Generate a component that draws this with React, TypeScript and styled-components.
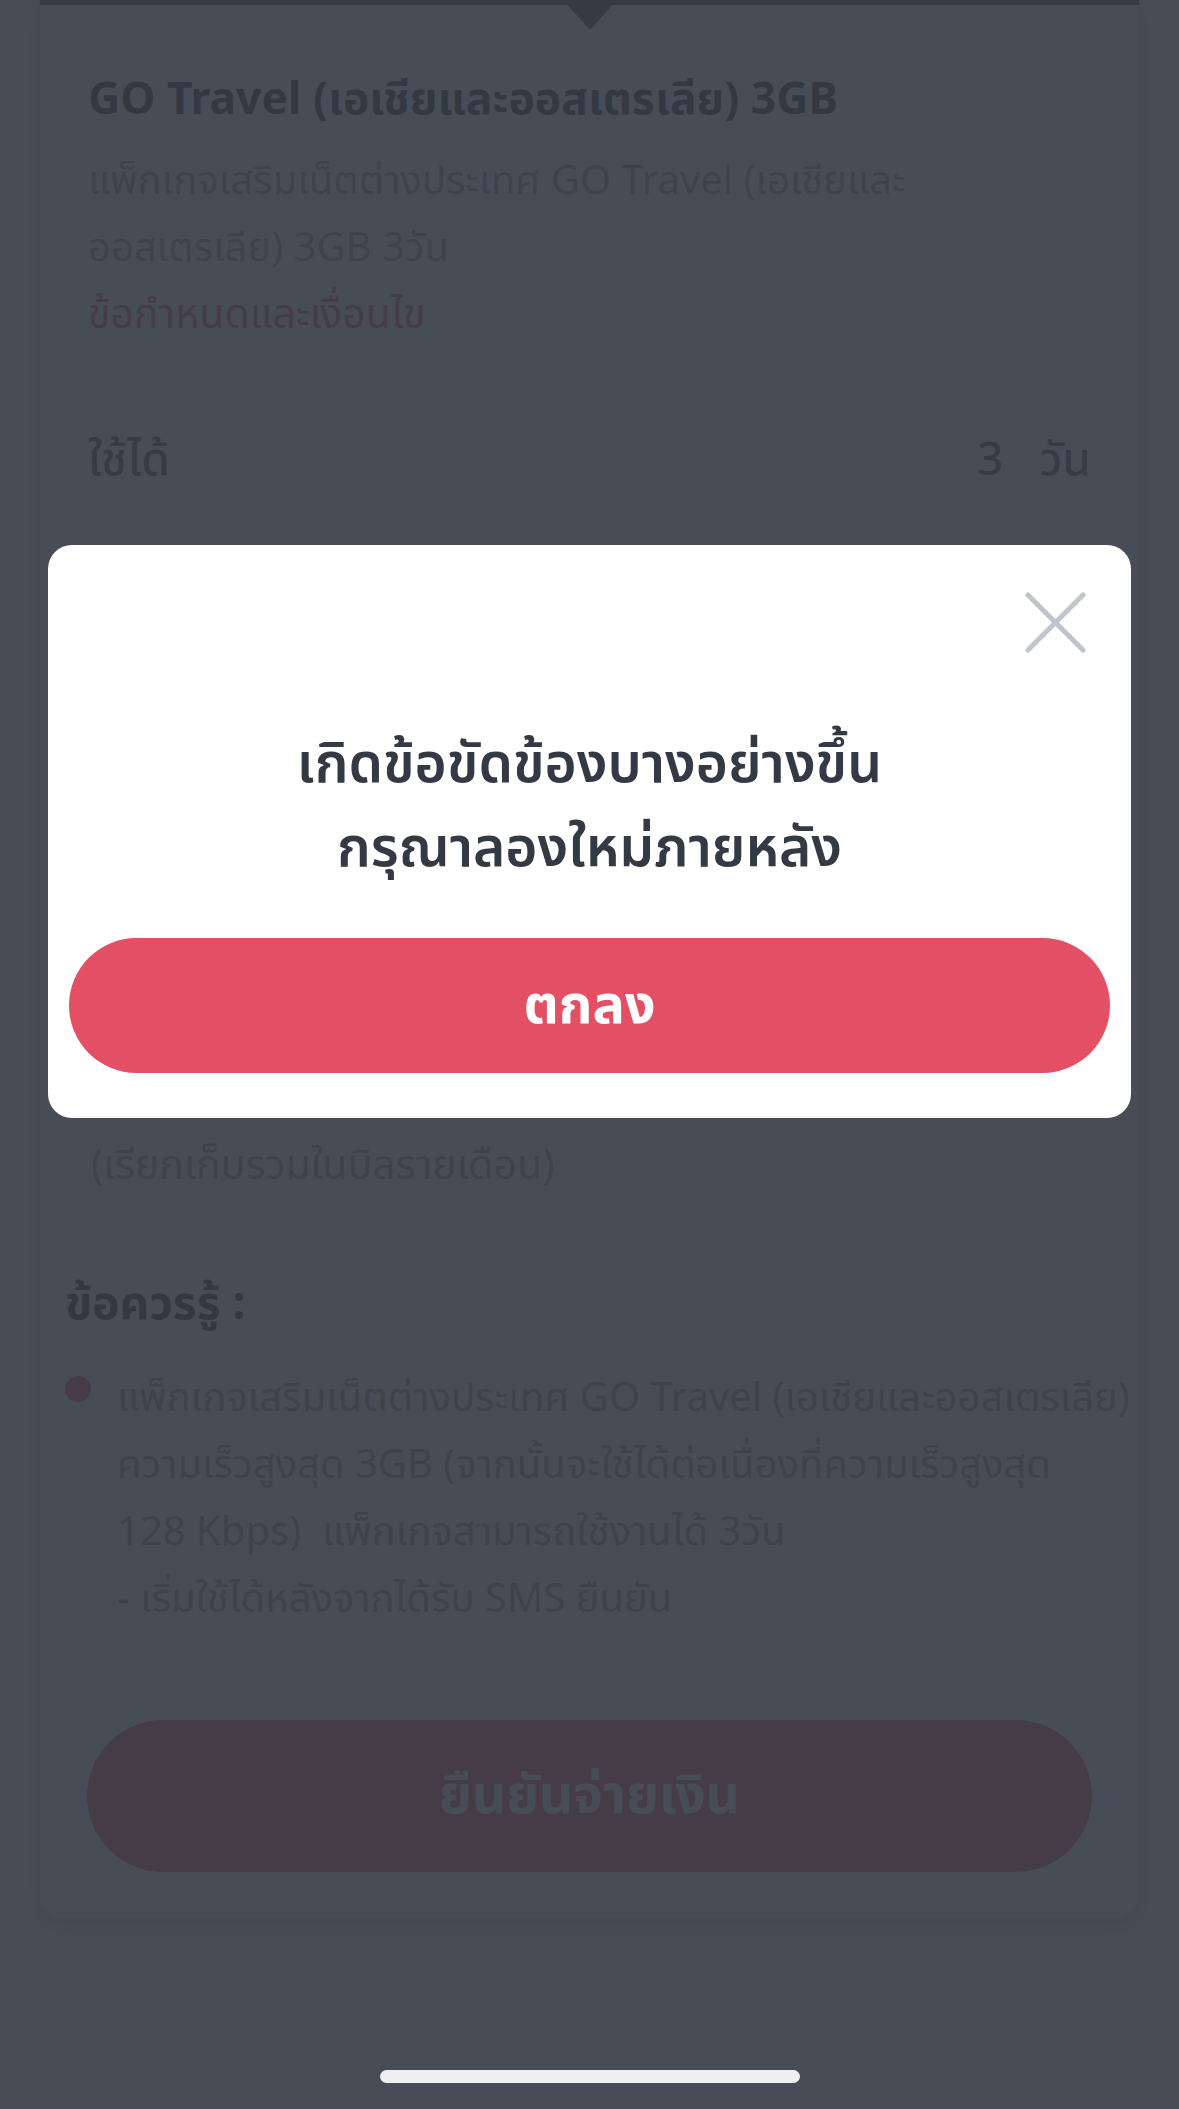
import React from 'react';
import styled, { createGlobalStyle } from 'styled-components';

const GlobalStyle = createGlobalStyle`
  * {
    box-sizing: border-box;
  }

  body {
    margin: 0;
    background: #ffffff;
    font-family: 'Noto Sans', 'Noto Sans Thai', 'Open Sans', sans-serif;
    color: #333;
  }
`;

const Page = styled.div`
  position: relative;
  min-height: 2109px;
  padding: 0 38px;
  background: #ffffff;
`;

const Card = styled.div`
  background: #ffffff;
  border: 2px solid #e6e6e6;
  border-top: none;
  border-radius: 0 0 26px 26px;
  box-shadow: 0 8px 18px rgba(0, 0, 0, 0.18);
`;

const TabIndicator = styled.div`
  height: 5px;
  background: #454545;
  display: flex;
  justify-content: center;

  &::after {
    content: '';
    border-left: 27px solid transparent;
    border-right: 27px solid transparent;
    border-top: 30px solid #454545;
    height: 0;
  }
`;

const Section = styled.div<{ $last?: boolean }>`
  margin: 0 33px;
  padding: 0 15px;
  border-bottom: ${(p) => (p.$last ? 'none' : '2px solid #eeeeee')};
`;

const Header = styled(Section)`
  padding-top: 62px;
  padding-bottom: 37px;
`;

const PackTitle = styled.h1`
  margin: 0 0 18px;
  font-size: 44.5px;
  line-height: 60px;
  font-weight: 700;
  color: #333333;
  white-space: nowrap;
`;

const Description = styled.p`
  margin: 0;
  font-size: 40px;
  line-height: 67px;
  font-weight: 400;
  color: #9a9a9a;
`;

const TermsLink = styled.a`
  display: block;
  font-size: 41px;
  line-height: 67px;
  font-weight: 400;
  color: #e3506a;
  text-decoration: none;
`;

const InfoRow = styled(Section)`
  height: 153px;
  display: flex;
  align-items: center;
  justify-content: space-between;
`;

const RowLabel = styled.span`
  font-size: 46px;
  font-weight: 500;
  color: #555555;
`;

const RowValue = styled.span`
  display: flex;
  gap: 36px;
  font-size: 46px;
  font-weight: 500;
  color: #555555;
`;

const Payment = styled(Section)`
  padding-top: 40px;
  padding-bottom: 24px;
`;

const PaymentTitle = styled.div`
  font-size: 44px;
  line-height: 67px;
  font-weight: 700;
  color: #333333;
  margin-bottom: 20px;
`;

const PaymentOption = styled.div`
  height: 296px;
  margin-bottom: 16px;
  display: flex;
  align-items: center;
  gap: 24px;
  padding: 0 30px;
  border: 2px solid #e3506a;
  border-radius: 20px;
  font-size: 42px;
  color: #333333;
`;

const Radio = styled.span`
  width: 36px;
  height: 36px;
  border-radius: 50%;
  border: 11px solid #e3506a;
`;

const SubNote = styled.div`
  font-size: 41px;
  line-height: 67px;
  font-weight: 400;
  color: #9a9a9a;
  padding-left: 3px;
`;

const Notes = styled.div`
  background: #fbfbfb;
  border-radius: 0 0 24px 24px;
  padding: 47px 0 46px 25px;
`;

const NotesTitle = styled.div`
  font-size: 46px;
  line-height: 67px;
  font-weight: 700;
  color: #333333;
  margin-bottom: 27px;
`;

const Bullet = styled.div`
  display: grid;
  grid-template-columns: 26px 1fr;
  column-gap: 26px;
`;

const Dot = styled.span`
  width: 26px;
  height: 26px;
  margin-top: 14px;
  border-radius: 50%;
  background: #e3506a;
`;

const BulletText = styled.div`
  font-size: 40px;
  line-height: 67px;
  font-weight: 400;
  color: #959595;

  span {
    display: block;
    white-space: nowrap;
  }
`;

const ConfirmButton = styled.button`
  display: block;
  width: calc(100% - 69px);
  height: 152px;
  margin: 90px 47px 0 22px;
  border: none;
  border-radius: 76px;
  background: #e3506a;
  color: #ffffff;
  font-family: inherit;
  font-size: 53px;
  font-weight: 700;
`;

const Backdrop = styled.div`
  position: fixed;
  inset: 0;
  background: rgba(51, 58, 69, 0.9);
  display: flex;
  flex-direction: column;
  align-items: center;
  padding-top: 545px;
`;

const Modal = styled.div`
  width: 1083px;
  background: #ffffff;
  border-radius: 24px;
  padding: 47px 21px 45px;
  display: flex;
  flex-direction: column;
`;

const CloseRow = styled.div`
  display: flex;
  justify-content: flex-end;
  padding-right: 24px;
`;

const CloseButton = styled.button`
  width: 61px;
  height: 61px;
  padding: 0;
  border: none;
  background: none;
  display: flex;
`;

const Message = styled.div`
  margin: 66px 0 51px;
  text-align: center;
  font-size: 55px;
  line-height: 84px;
  font-weight: 600;
  color: #343a44;
`;

const OkButton = styled.button`
  height: 135px;
  border: none;
  border-radius: 68px;
  background: #e35066;
  color: #ffffff;
  font-family: inherit;
  font-size: 54px;
  font-weight: 700;
`;

const HomeIndicator = styled.div`
  margin-top: auto;
  margin-bottom: 26px;
  width: 420px;
  height: 13px;
  border-radius: 7px;
  background: #eeeff0;
`;

const App: React.FC = () => {
  return (
    <>
      <GlobalStyle />
      <Page>
        <Card>
          <TabIndicator />
          <Header>
            <PackTitle>GO Travel (เอเชียและออสเตรเลีย) 3GB</PackTitle>
            <Description>
              แพ็กเกจเสริมเน็ตต่างประเทศ GO Travel (เอเชียและ
              <br />
              ออสเตรเลีย) 3GB 3วัน
            </Description>
            <TermsLink href="#">ข้อกำหนดและเงื่อนไข</TermsLink>
          </Header>
          <InfoRow>
            <RowLabel>ใช้ได้</RowLabel>
            <RowValue>
              <span>3</span>
              <span>วัน</span>
            </RowValue>
          </InfoRow>
          <InfoRow>
            <RowLabel>ราคา</RowLabel>
            <RowValue>
              <span>199</span>
              <span>บาท</span>
            </RowValue>
          </InfoRow>
          <Payment $last>
            <PaymentTitle>ชำระผ่าน</PaymentTitle>
            <PaymentOption>
              <Radio />
              บิลรายเดือน
            </PaymentOption>
            <SubNote>(เรียกเก็บรวมในบิลรายเดือน)</SubNote>
          </Payment>
          <Notes>
            <NotesTitle>ข้อควรรู้ :</NotesTitle>
            <Bullet>
              <Dot />
              <BulletText>
                <span>แพ็กเกจเสริมเน็ตต่างประเทศ GO Travel (เอเชียและออสเตรเลีย)</span>
                <span>ความเร็วสูงสุด 3GB (จากนั้นจะใช้ได้ต่อเนื่องที่ความเร็วสูงสุด</span>
                <span>128 Kbps)&nbsp; แพ็กเกจสามารถใช้งานได้ 3วัน</span>
                <span>- เริ่มใช้ได้หลังจากได้รับ SMS ยืนยัน</span>
              </BulletText>
            </Bullet>
            <ConfirmButton>ยืนยันจ่ายเงิน</ConfirmButton>
          </Notes>
        </Card>

        <Backdrop>
          <Modal>
            <CloseRow>
              <CloseButton aria-label="ปิด">
                <svg width="61" height="61" viewBox="0 0 61 61">
                  <path
                    d="M3 3 L58 58 M58 3 L3 58"
                    stroke="#bfc5cb"
                    strokeWidth="5"
                    strokeLinecap="round"
                    fill="none"
                  />
                </svg>
              </CloseButton>
            </CloseRow>
            <Message>
              เกิดข้อขัดข้องบางอย่างขึ้น
              <br />
              กรุณาลองใหม่ภายหลัง
            </Message>
            <OkButton>ตกลง</OkButton>
          </Modal>
          <HomeIndicator />
        </Backdrop>
      </Page>
    </>
  );
};

export default App;
